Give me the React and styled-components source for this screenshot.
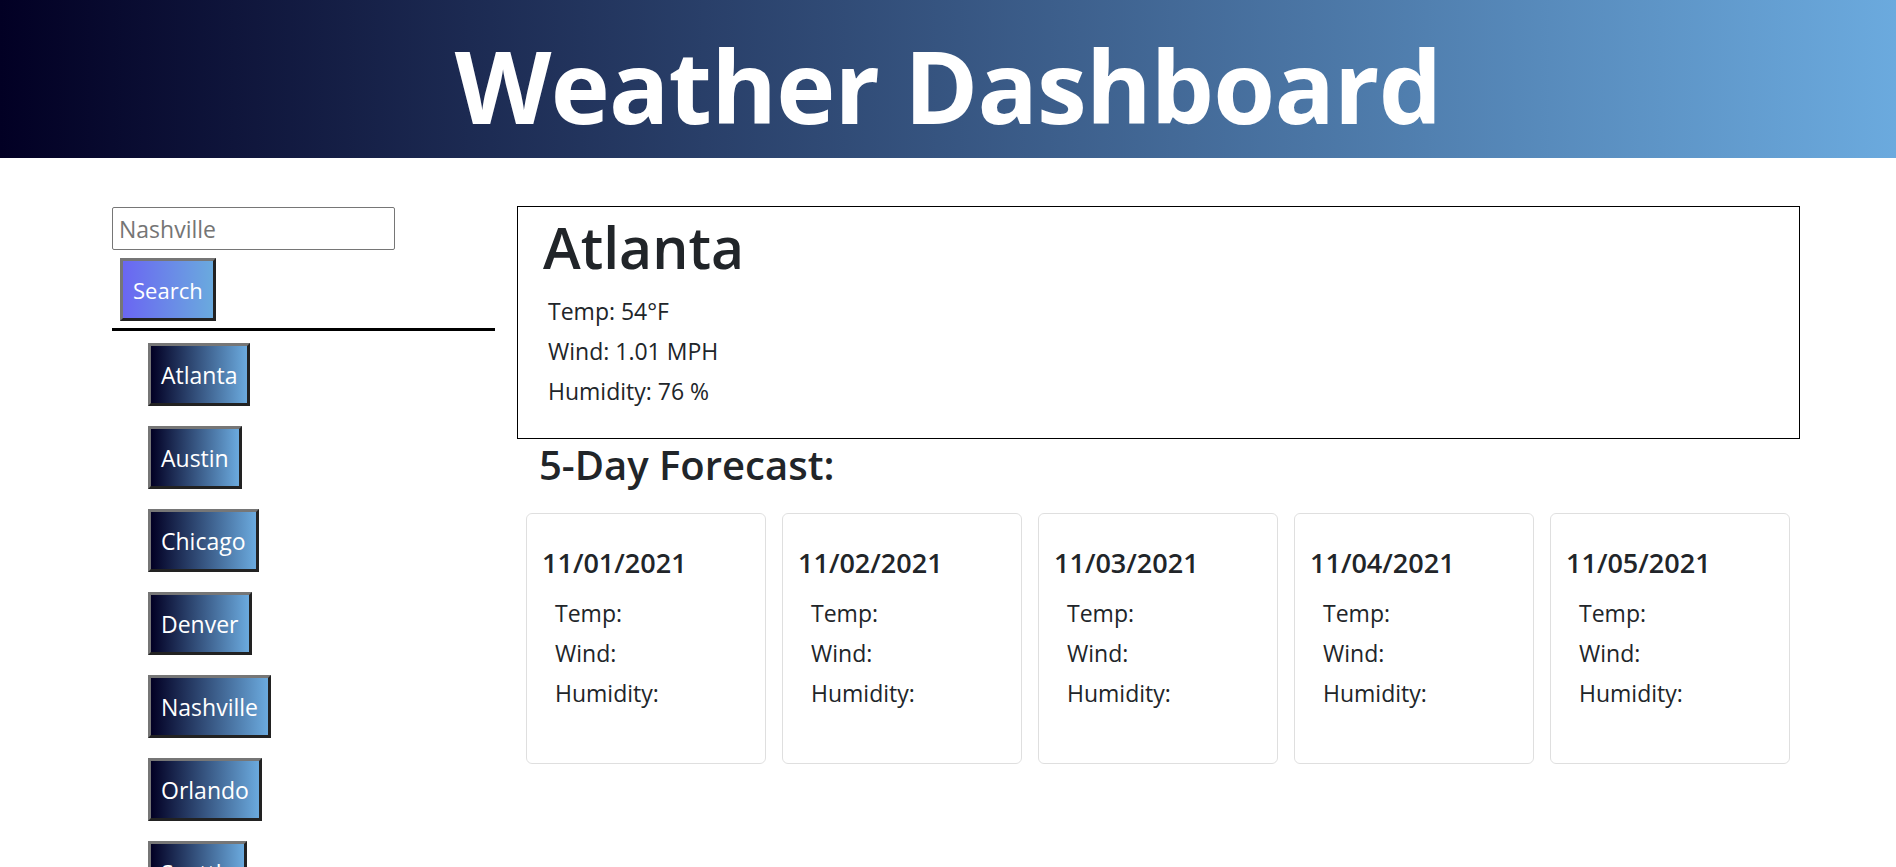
import React from "react";
import styled, { createGlobalStyle } from "styled-components";

const GlobalStyle = createGlobalStyle`
  *, *::before, *::after { box-sizing: border-box; }
  html, body { margin: 0; padding: 0; overflow: hidden; background: #fff; }
  body {
    font-family: "Open Sans", "Noto Sans", "Liberation Sans", sans-serif;
    color: #212529;
  }
`;

const Page = styled.div`
  width: 100%;
  height: 867px;
  overflow: hidden;
`;

const Header = styled.header`
  height: 158px;
  display: flex;
  align-items: center;
  justify-content: center;
  background: linear-gradient(90deg, #020024 0%, #6baade 100%);
`;

const Title = styled.h1`
  margin: 0;
  padding-top: 12px;
  color: #fff;
  font-weight: 700;
  font-size: 100px;
  line-height: 1;
  letter-spacing: -0.8px;
`;

const Main = styled.main`
  display: flex;
  align-items: flex-start;
  gap: 22px;
  padding: 48px 96px 0 112px;
`;

const Sidebar = styled.aside`
  width: 383px;
  flex: none;
  display: flex;
  flex-direction: column;
  align-items: flex-start;
`;

const SearchInput = styled.input`
  margin-top: 1px;
  width: 283px;
  height: 43px;
  border: 1px solid #767676;
  border-radius: 2px;
  padding: 0 6px;
  font-family: inherit;
  font-size: 23px;
  color: #212529;
  outline: none;
  &::placeholder { color: #757575; }
`;

const GradientButton = styled.button`
  height: 63px;
  padding: 0 10px;
  border-width: 3px;
  border-style: solid;
  border-color: #767676 #222 #222 #767676;
  font-family: inherit;
  font-size: ${(p) => (p.$variant === "search" ? 22 : 23)}px;
  color: #fff;
  cursor: pointer;
  background: ${(p) =>
    p.$variant === "search"
      ? "linear-gradient(90deg, #6a66f2 0%, #6aaade 100%)"
      : "linear-gradient(90deg, #020024 0%, #6baade 100%)"};
`;

const SearchButton = styled(GradientButton)`
  margin: 8px 0 0 8px;
`;

const Divider = styled.hr`
  width: 100%;
  height: 3px;
  margin: 7px 0 0;
  border: 0;
  background: #000;
`;

const CityList = styled.ul`
  list-style: none;
  margin: 12px 0 0;
  padding: 0 0 0 36px;
  display: flex;
  flex-direction: column;
  align-items: flex-start;
  gap: 20px;
`;

const Content = styled.section`
  flex: 1;
  min-width: 0;
  display: flex;
  flex-direction: column;
`;

const CurrentBox = styled.div`
  height: 233px;
  border: 1px solid #000;
  padding: 4px 24px 0 25px;
`;

const CityName = styled.h2`
  margin: 0;
  font-size: 57px;
  font-weight: 600;
  line-height: 72px;
`;

const StatList = styled.div`
  margin-top: ${(p) => p.$top}px;
  padding-left: ${(p) => p.$indent}px;
`;

const Stat = styled.p`
  margin: 0;
  font-size: 23px;
  line-height: 40px;
`;

const ForecastTitle = styled.h3`
  margin: 2px 0 0 22px;
  font-size: 40px;
  font-weight: 600;
  line-height: 48px;
`;

const CardRow = styled.div`
  margin-top: 24px;
  padding: 0 9px;
  display: grid;
  grid-template-columns: repeat(5, 240px);
  gap: 16px;
`;

const Card = styled.div`
  height: 251px;
  border: 1px solid rgba(0, 0, 0, 0.125);
  border-radius: 6px;
  padding: 31px 14px 0 15px;
`;

const CardDate = styled.h5`
  margin: 0;
  font-size: 27px;
  font-weight: 600;
  line-height: 36px;
`;

const cities = ["Atlanta", "Austin", "Chicago", "Denver", "Nashville", "Orlando", "Seattle"];
const days = ["11/01/2021", "11/02/2021", "11/03/2021", "11/04/2021", "11/05/2021"];

export default function App() {
  return (
    <Page>
      <GlobalStyle />
      <Header>
        <Title>Weather Dashboard</Title>
      </Header>
      <Main>
        <Sidebar>
          <SearchInput placeholder="Nashville" />
          <SearchButton $variant="search">Search</SearchButton>
          <Divider />
          <CityList>
            {cities.map((c) => (
              <li key={c}>
                <GradientButton>{c}</GradientButton>
              </li>
            ))}
          </CityList>
        </Sidebar>
        <Content>
          <CurrentBox>
            <CityName>Atlanta</CityName>
            <StatList $top={8} $indent={5}>
              <Stat>Temp: 54°F</Stat>
              <Stat>Wind: 1.01 MPH</Stat>
              <Stat>Humidity: 76 %</Stat>
            </StatList>
          </CurrentBox>
          <ForecastTitle>5-Day Forecast:</ForecastTitle>
          <CardRow>
            {days.map((d) => (
              <Card key={d}>
                <CardDate>{d}</CardDate>
                <StatList $top={12} $indent={13}>
                  <Stat>Temp:</Stat>
                  <Stat>Wind:</Stat>
                  <Stat>Humidity:</Stat>
                </StatList>
              </Card>
            ))}
          </CardRow>
        </Content>
      </Main>
    </Page>
  );
}
